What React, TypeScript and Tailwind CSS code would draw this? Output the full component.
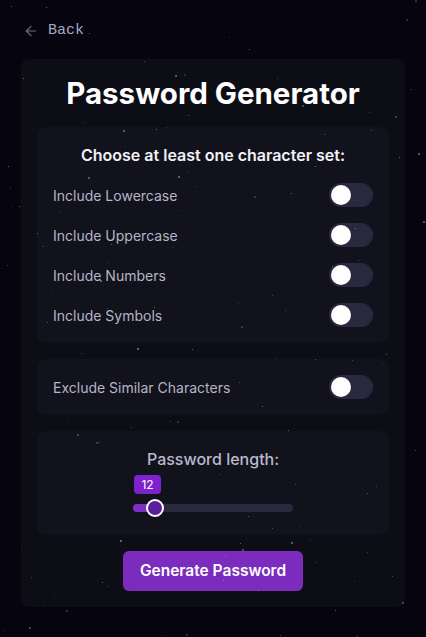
import { ArrowLeft } from "lucide-react";

// tiny seeded PRNG so the star field is the same on every render
function makeRand(seed: number) {
    let s = seed;
    return () => {
        s = (s * 1664525 + 1013904223) % 4294967296;
        return s / 4294967296;
    };
}

const rand = makeRand(7);
const stars = Array.from({ length: 130 }, () => ({
    x: rand() * 426,
    y: rand() * 637,
    size: rand() < 0.8 ? 1 : 2,
    opacity: 0.25 + rand() * 0.65,
}));

function Toggle() {
    return (
        <div className="w-[44px] h-[24px] rounded-full bg-[#29283f] flex items-center px-[2px]">
            <div className="w-[20px] h-[20px] rounded-full bg-white" />
        </div>
    );
}

const sets = ["Include Lowercase", "Include Uppercase", "Include Numbers", "Include Symbols"];

export default function App() {
    return (
        <main
            className="relative min-h-screen overflow-hidden bg-[#05040f] px-[21px] pt-[22px] pb-[30px]"
            style={{ fontFamily: "Inter, 'Noto Sans', sans-serif" }}
        >
            {/* Back link */}
            <div className="flex items-center gap-[9px] h-[18px] pl-[2px] text-[#a8a8c0]">
                <ArrowLeft size={16} strokeWidth={1.75} className="text-[#6e6e85]" />
                <span className="text-[15px]" style={{ fontFamily: "'Liberation Mono', monospace" }}>Back</span>
            </div>

            {/* Card */}
            <div className="mt-[19px] w-[384px] rounded-lg bg-[#0d0d16] p-4 flex flex-col gap-4">
                <h1 className="text-center text-[29.5px] leading-[36px] font-bold text-white">
                    Password Generator
                </h1>

                {/* Character sets */}
                <div className="rounded-lg bg-[#12121c] p-4 flex flex-col gap-4">
                    <h2 className="text-center text-[16px] leading-[24px] font-semibold text-[#f1f1f6]">
                        Choose at least one character set:
                    </h2>
                    {sets.map((label) => (
                        <div key={label} className="flex items-center justify-between h-[24px]">
                            <span className="text-[14px] text-[#b5b5c7]">{label}</span>
                            <Toggle />
                        </div>
                    ))}
                </div>

                {/* Exclude similar */}
                <div className="rounded-lg bg-[#12121c] p-4 flex items-center justify-between">
                    <span className="text-[14px] text-[#b5b5c7]">Exclude Similar Characters</span>
                    <Toggle />
                </div>

                {/* Length */}
                <div className="rounded-lg bg-[#12121c] pt-4 pb-[18px] flex flex-col items-center">
                    <p className="text-[16px] leading-[24px] font-medium text-[#b9b9cb]">Password length:</p>
                    <div className="w-[160px] mt-[4px]">
                        <div className="ml-[1px] w-[27px] h-[19px] rounded bg-[#7e22ce] flex items-center justify-center text-[12px] text-white">
                            12
                        </div>
                        <div className="relative h-[18px] mt-[5px] flex items-center">
                            <div className="w-full h-[8px] rounded-full bg-[#29283f]" />
                            <div className="absolute left-0 w-[20px] h-[8px] rounded-full bg-[#7e2fc6]" />
                            <div className="absolute left-[13px] w-[18px] h-[18px] rounded-full bg-[#5b1f9c] border-2 border-white" />
                        </div>
                    </div>
                </div>

                <div className="flex justify-center">
                    <button className="w-[180px] h-[40px] rounded-md bg-[#7b2cbf] text-white text-[15.5px] font-semibold">
                        Generate Password
                    </button>
                </div>
            </div>

            {/* Star field */}
            <div className="pointer-events-none absolute inset-0">
                {stars.map((s, i) => (
                    <div
                        key={i}
                        className="absolute rounded-full bg-white"
                        style={{ left: s.x, top: s.y, width: s.size, height: s.size, opacity: s.opacity * 0.55 }}
                    />
                ))}
            </div>
        </main>
    );
}
